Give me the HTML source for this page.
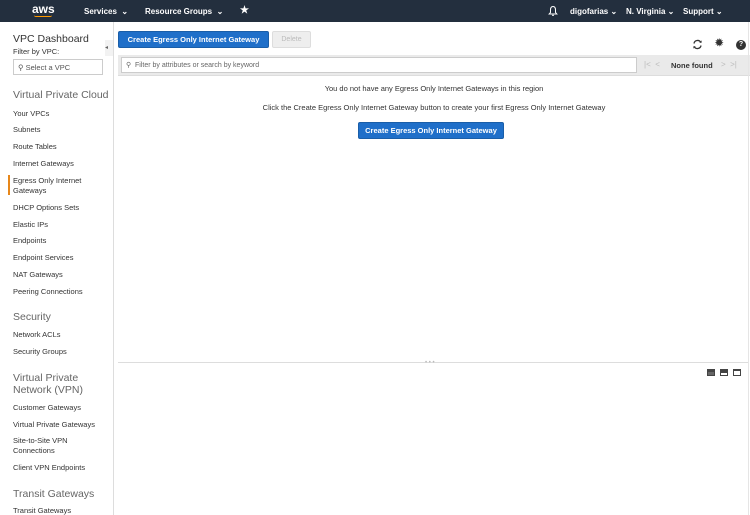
<!DOCTYPE html><html><head><style>
*{margin:0;padding:0;box-sizing:border-box}
body{width:750px;height:515px;overflow:hidden;font-family:"Liberation Sans",sans-serif;background:#fff;position:relative;color:#333}
.a{position:absolute;white-space:nowrap}
.top{position:absolute;left:0;top:0;width:750px;height:22px;background:#232f3e}
.tw{color:#fff;font-size:8px;font-weight:bold}
.s{font-size:7.5px;color:#333}
.h{font-size:10.5px;color:#666}
.btn{position:absolute;background:#1f6fc9;color:#fff;font-size:7.5px;font-weight:bold;border-radius:2px;text-align:center;border:1px solid #1a5ea8}
</style></head><body>
<div class="top"></div>
<div class="a" style="left:32px;top:2px;color:#fff;font-size:12px;font-weight:bold">aws</div>
<div class="a" style="left:34px;top:15px;width:18px;height:2px;border-bottom:1.5px solid #f90;border-radius:0 0 8px 8px"></div>
<div class="a tw" style="left:84px;top:7px">Services &nbsp;⌄</div>
<div class="a tw" style="left:145px;top:7px">Resource Groups &nbsp;⌄</div>
<div class="a tw" style="left:240px;top:5px;font-size:10px">★</div>
<svg class="a" style="left:548px;top:5px" width="10" height="12" viewBox="0 0 10 12"><path d="M5 1.5C3 1.5 2.5 3 2.5 5V7.5L1.2 9H8.8L7.5 7.5V5C7.5 3 7 1.5 5 1.5Z" fill="none" stroke="#fff" stroke-width="1"/><path d="M4 10.3H6" stroke="#fff" stroke-width="1"/></svg>
<div class="a tw" style="left:570px;top:7px">digofarias ⌄</div>
<div class="a tw" style="left:626px;top:7px">N. Virginia ⌄</div>
<div class="a tw" style="left:683px;top:7px">Support ⌄</div>

<div class="a" style="left:113px;top:22px;width:1px;height:493px;background:#ddd"></div>
<div class="a" style="left:105px;top:40px;width:8px;height:16px;background:#f2f2f2;font-size:6px;color:#666;padding-top:4px">◂</div>
<div class="a" style="left:13px;top:33px;font-size:10.5px;color:#333">VPC Dashboard</div>
<div class="a s" style="left:13px;top:47px">Filter by VPC:</div>
<div class="a" style="left:13px;top:59px;width:90px;height:16px;border:1px solid #ccc;font-size:7.5px;padding:3px 4px;color:#555">⚲ Select a VPC</div>
<div class="a h" style="left:13px;top:89px">Virtual Private Cloud</div>
<div class="a s" style="left:13px;top:109px">Your VPCs</div>
<div class="a s" style="left:13px;top:125px">Subnets</div>
<div class="a s" style="left:13px;top:142px">Route Tables</div>
<div class="a s" style="left:13px;top:159px">Internet Gateways</div>
<div class="a" style="left:8px;top:175px;width:1.5px;height:20px;background:#e7871a"></div>
<div class="a s" style="left:13px;top:176px;line-height:9.5px">Egress Only Internet<br>Gateways</div>
<div class="a s" style="left:13px;top:203px">DHCP Options Sets</div>
<div class="a s" style="left:13px;top:220px">Elastic IPs</div>
<div class="a s" style="left:13px;top:236px">Endpoints</div>
<div class="a s" style="left:13px;top:253px">Endpoint Services</div>
<div class="a s" style="left:13px;top:270px">NAT Gateways</div>
<div class="a s" style="left:13px;top:287px">Peering Connections</div>
<div class="a h" style="left:13px;top:311px">Security</div>
<div class="a s" style="left:13px;top:330px">Network ACLs</div>
<div class="a s" style="left:13px;top:347px">Security Groups</div>
<div class="a h" style="left:13px;top:372px;line-height:12px">Virtual Private<br>Network (VPN)</div>
<div class="a s" style="left:13px;top:403px">Customer Gateways</div>
<div class="a s" style="left:13px;top:420px">Virtual Private Gateways</div>
<div class="a s" style="left:13px;top:436px;line-height:10px">Site-to-Site VPN<br>Connections</div>
<div class="a s" style="left:13px;top:463px">Client VPN Endpoints</div>
<div class="a h" style="left:13px;top:488px">Transit Gateways</div>
<div class="a s" style="left:13px;top:506px">Transit Gateways</div>

<div class="btn" style="left:118px;top:31px;width:151px;height:17px;line-height:15px">Create Egress Only Internet Gateway</div>
<div class="a" style="left:272px;top:31px;width:39px;height:17px;background:#eee;border:1px solid #ddd;color:#bbb;font-size:7px;text-align:center;line-height:15px;border-radius:2px">Delete</div>
<svg class="a" style="left:692px;top:39px" width="11" height="11" viewBox="0 0 11 11"><path d="M2 4.5A3.6 3.6 0 0 1 8.8 3.5M9 6.5A3.6 3.6 0 0 1 2.2 7.5" fill="none" stroke="#333" stroke-width="1.3"/><path d="M7.3 3.7H9.6V1.4Z M3.7 7.3H1.4V9.6Z" fill="#333"/></svg>
<div class="a" style="left:715px;top:38px;font-size:10px;color:#333;font-weight:bold">✹</div>
<div class="a" style="left:736px;top:40px;width:10px;height:10px;border-radius:50%;background:#333;color:#fff;font-size:7px;font-weight:bold;text-align:center;line-height:10px">?</div>
<div class="a" style="left:118px;top:55px;width:632px;height:21px;background:#eaeaea;border-bottom:1px solid #ddd"></div>
<div class="a" style="left:121px;top:57px;width:516px;height:16px;background:#fff;border:1px solid #ccc;font-size:7px;color:#666;padding:3px 4px">⚲ &nbsp;Filter by attributes or search by keyword</div>
<div class="a" style="left:644px;top:60px;font-size:8px;color:#bbb">|&lt; &nbsp;&lt;</div>
<div class="a" style="left:671px;top:61px;font-size:7.5px;font-weight:bold;color:#333">None found</div>
<div class="a" style="left:721px;top:60px;font-size:8px;color:#bbb">&gt; &nbsp;&gt;|</div>
<div class="a s" style="left:118px;width:632px;top:84px;text-align:center">You do not have any Egress Only Internet Gateways in this region</div>
<div class="a s" style="left:118px;width:632px;top:103px;text-align:center">Click the Create Egress Only Internet Gateway button to create your first Egress Only Internet Gateway</div>
<div class="btn" style="left:358px;top:122px;width:146px;height:17px;line-height:15px">Create Egress Only Internet Gateway</div>
<div class="a" style="left:118px;top:362px;width:630px;height:1px;background:#ddd"></div>
<div class="a" style="left:425px;top:360px;font-size:6px;color:#bbb">• • •</div>
<div class="a" style="left:707px;top:369px;width:8px;height:7px;border:1px solid #444;border-top:3px solid #444;background:#666"></div>
<div class="a" style="left:720px;top:369px;width:8px;height:7px;border:1px solid #444;border-top:4px solid #444"></div>
<div class="a" style="left:733px;top:369px;width:8px;height:7px;border:1px solid #444;border-top:2px solid #444"></div>
<div class="a" style="left:748px;top:22px;width:1px;height:493px;background:#e5e5e5"></div>
</body></html>
